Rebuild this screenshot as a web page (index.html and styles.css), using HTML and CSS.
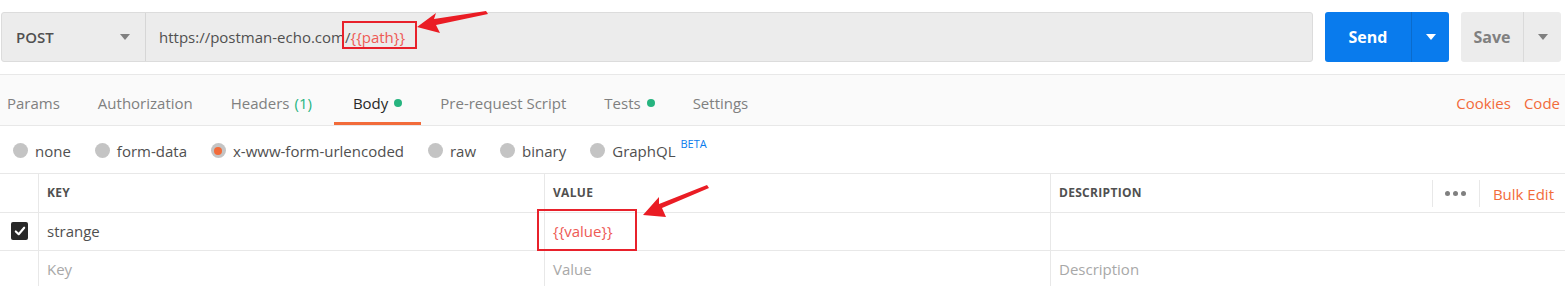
FILE: index.html
```html
<!DOCTYPE html>
<html lang="en">
<head>
    <meta charset="utf-8">
    <title>Request - Body</title>
    <link rel="stylesheet" href="styles.css">
</head>
<body>
    <div class="page">
        <div class="request-bar">
            <div class="url-group">
                <div class="method">
                    <span>POST</span>
                    <span class="caret caret-gray"></span>
                </div>
                <div class="url"><span>https://postman-echo.com</span><span class="var var-path"><span class="slash">/</span>{{path}}</span></div>
            </div>
            <div class="btn-send">
                <span class="btn-label">Send</span>
                <span class="btn-drop"><span class="caret caret-white"></span></span>
            </div>
            <div class="btn-save">
                <span class="btn-label">Save</span>
                <span class="btn-drop"><span class="caret caret-gray"></span></span>
            </div>
        </div>

        <div class="tabs">
            <div class="tab">Params</div>
            <div class="tab">Authorization</div>
            <div class="tab">Headers <span class="count">(1)</span></div>
            <div class="tab active">Body <span class="dot"></span></div>
            <div class="tab">Pre-request Script</div>
            <div class="tab">Tests <span class="dot"></span></div>
            <div class="tab">Settings</div>
            <div class="tab-links">
                <a class="link">Cookies</a>
                <a class="link">Code</a>
            </div>
        </div>

        <div class="body-types">
            <label class="radio"><span class="circle"></span>none</label>
            <label class="radio"><span class="circle"></span>form-data</label>
            <label class="radio"><span class="circle checked"></span>x-www-form-urlencoded</label>
            <label class="radio"><span class="circle"></span>raw</label>
            <label class="radio"><span class="circle"></span>binary</label>
            <label class="radio"><span class="circle"></span>GraphQL<sup class="beta">BETA</sup></label>
        </div>

        <div class="table">
            <div class="row head">
                <div class="cell check"></div>
                <div class="cell">KEY</div>
                <div class="cell">VALUE</div>
                <div class="cell desc-head">
                    <span>DESCRIPTION</span>
                    <div class="head-tools">
                        <span class="more"><i></i><i></i><i></i></span>
                        <a class="link">Bulk Edit</a>
                    </div>
                </div>
            </div>
            <div class="row">
                <div class="cell check">
                    <span class="checkbox">
                        <svg width="12" height="12" viewBox="0 0 12 12"><path d="M1.8 6.4 L4.7 9.2 L10.2 2.7" fill="none" stroke="#fff" stroke-width="2.1" stroke-linecap="round" stroke-linejoin="round"/></svg>
                    </span>
                </div>
                <div class="cell">strange</div>
                <div class="cell"><span class="var var-value">{{value}}</span></div>
                <div class="cell"></div>
            </div>
            <div class="row">
                <div class="cell check"></div>
                <div class="cell placeholder">Key</div>
                <div class="cell placeholder">Value</div>
                <div class="cell placeholder">Description</div>
            </div>
        </div>

        <!-- annotation arrows -->
        <svg class="arrows" width="1565" height="286" viewBox="0 0 1565 286">
            <polygon points="417,27 436,13 434,19 486,11 488,14 436,25 440,33" fill="#ea1c24"/>
            <polygon points="643,215 659,197 659,204 707,185 709,188 662,208 666,217" fill="#ea1c24"/>
        </svg>
    </div>
</body>
</html>
```

FILE: styles.css
```css
* {
    margin: 0;
    padding: 0;
    box-sizing: border-box;
}

body {
    font-family: 'Open Sans', 'Liberation Sans', Arial, sans-serif;
    font-size: 15px;
    color: #505050;
    background: #fff;
}

.page {
    position: relative;
    width: 1565px;
    height: 286px;
    overflow: hidden;
}

/* request bar */
.request-bar {
    display: flex;
    height: 74px;
    padding: 12px 4px 12px 1px;
}

.url-group {
    flex: 1;
    display: flex;
    background: #ececec;
    border: 1px solid #dcdcdc;
    border-radius: 3px;
}

.method {
    width: 144px;
    display: flex;
    align-items: center;
    justify-content: space-between;
    padding: 0 15px 0 14px;
    border-right: 1px solid #d6d6d6;
    font-weight: 600;
    color: #505050;
}

.url {
    display: flex;
    align-items: center;
    padding-left: 13px;
}

.caret {
    width: 0;
    height: 0;
    border-left: 5px solid transparent;
    border-right: 5px solid transparent;
}

.caret-gray {
    border-top: 6px solid #808080;
}

.caret-white {
    border-top: 6px solid #fff;
}

.btn-send,
.btn-save {
    display: flex;
    border-radius: 3px;
    font-size: 16px;
    font-weight: 700;
}

.btn-send {
    width: 124px;
    margin-left: 12px;
    background: #097bed;
    color: #fff;
}

.btn-save {
    width: 100px;
    margin-left: 12px;
    background: #ececec;
    color: #808080;
}

.btn-label {
    flex: 1;
    display: flex;
    align-items: center;
    justify-content: center;
}

.btn-drop {
    display: flex;
    align-items: center;
    justify-content: center;
    width: 38px;
}

.btn-send .btn-drop {
    border-left: 1px solid #0a6bcc;
}

.btn-save .btn-drop {
    border-left: 1px solid #dadada;
}

/* variables */
.var {
    position: relative;
    color: #ee5a55;
}

.slash {
    color: #505050;
}

.var::after {
    content: "";
    position: absolute;
    border: 2px solid #e8212b;
}

.var-path::after {
    top: -6px;
    bottom: -2px;
    left: -3px;
    right: -12px;
}

.var-value::after {
    top: -12px;
    bottom: -10px;
    left: -16px;
    right: -24px;
}

/* tabs */
.tabs {
    display: flex;
    height: 52px;
    background: #fafafa;
    border-top: 1px solid #e8e8e8;
    border-bottom: 1px solid #e8e8e8;
}

.tab {
    display: flex;
    align-items: center;
    padding: 6px 19px 0;
    color: #808080;
    position: relative;
}

.tab:first-child {
    padding-left: 7px;
}

.tab .count {
    color: #26b47f;
    margin-left: 5px;
    margin-right: 3px;
}

.tab.active {
    color: #282828;
}

.tab.active::after {
    content: "";
    position: absolute;
    left: 0;
    right: 0;
    bottom: 0;
    height: 3px;
    background: #f26b3a;
}

.dot {
    width: 8px;
    height: 8px;
    border-radius: 50%;
    background: #26b47f;
    margin-left: 6px;
}

.tab-links {
    margin-left: auto;
    display: flex;
    align-items: center;
    gap: 13px;
    padding: 6px 5px 0 0;
}

.link {
    color: #f26b3a;
}

/* body types */
.body-types {
    display: flex;
    align-items: center;
    height: 47px;
    padding: 2px 0 0 13px;
    gap: 24px;
}

.radio {
    display: flex;
    align-items: center;
    color: #505050;
}

.circle {
    width: 15px;
    height: 15px;
    border-radius: 50%;
    background: #c4c4c4;
    margin-right: 7px;
    display: flex;
    align-items: center;
    justify-content: center;
}

.circle.checked::before {
    content: "";
    width: 8px;
    height: 8px;
    border-radius: 50%;
    background: #f26b3a;
}

.beta {
    font-size: 11px;
    color: #097bed;
    margin-left: 5px;
    position: relative;
    top: -7px;
}

/* table */
.table {
    border-top: 1px solid #e8e8e8;
}

.row {
    display: grid;
    grid-template-columns: 38px 506px 506px 1fr;
    height: 38px;
    border-bottom: 1px solid #e8e8e8;
}

.row.head {
    height: 39px;
    font-size: 12px;
    font-weight: 700;
    letter-spacing: 0.3px;
    color: #505050;
}

.cell {
    display: flex;
    align-items: center;
    padding: 0 0 2px 8px;
    border-left: 1px solid #e8e8e8;
}

.cell.check {
    border-left: none;
    padding-left: 11px;
}

.placeholder {
    color: #a8a8a8;
}

.row:last-child {
    border-bottom: none;
}

.checkbox {
    width: 17px;
    height: 18px;
    border-radius: 2px;
    background: #282828;
    display: flex;
    align-items: center;
    justify-content: center;
}

.desc-head {
    justify-content: space-between;
    padding-bottom: 0;
}

.desc-head > span {
    padding-bottom: 2px;
}

.head-tools {
    display: flex;
    align-items: center;
    height: 100%;
    font-size: 15px;
    font-weight: 400;
    letter-spacing: 0;
}

.more {
    display: flex;
    align-items: center;
    gap: 3px;
    padding: 0 13px 0 12px;
    border-left: 1px solid #e8e8e8;
    border-right: 1px solid #e8e8e8;
    height: 27px;
    margin-left: 3px;
}

.more i {
    width: 5px;
    height: 5px;
    border-radius: 50%;
    background: #808080;
}

.head-tools .link {
    padding: 2px 11px 0 13px;
}

/* annotation overlay */
.arrows {
    position: absolute;
    left: 0;
    top: 0;
    pointer-events: none;
}
```
